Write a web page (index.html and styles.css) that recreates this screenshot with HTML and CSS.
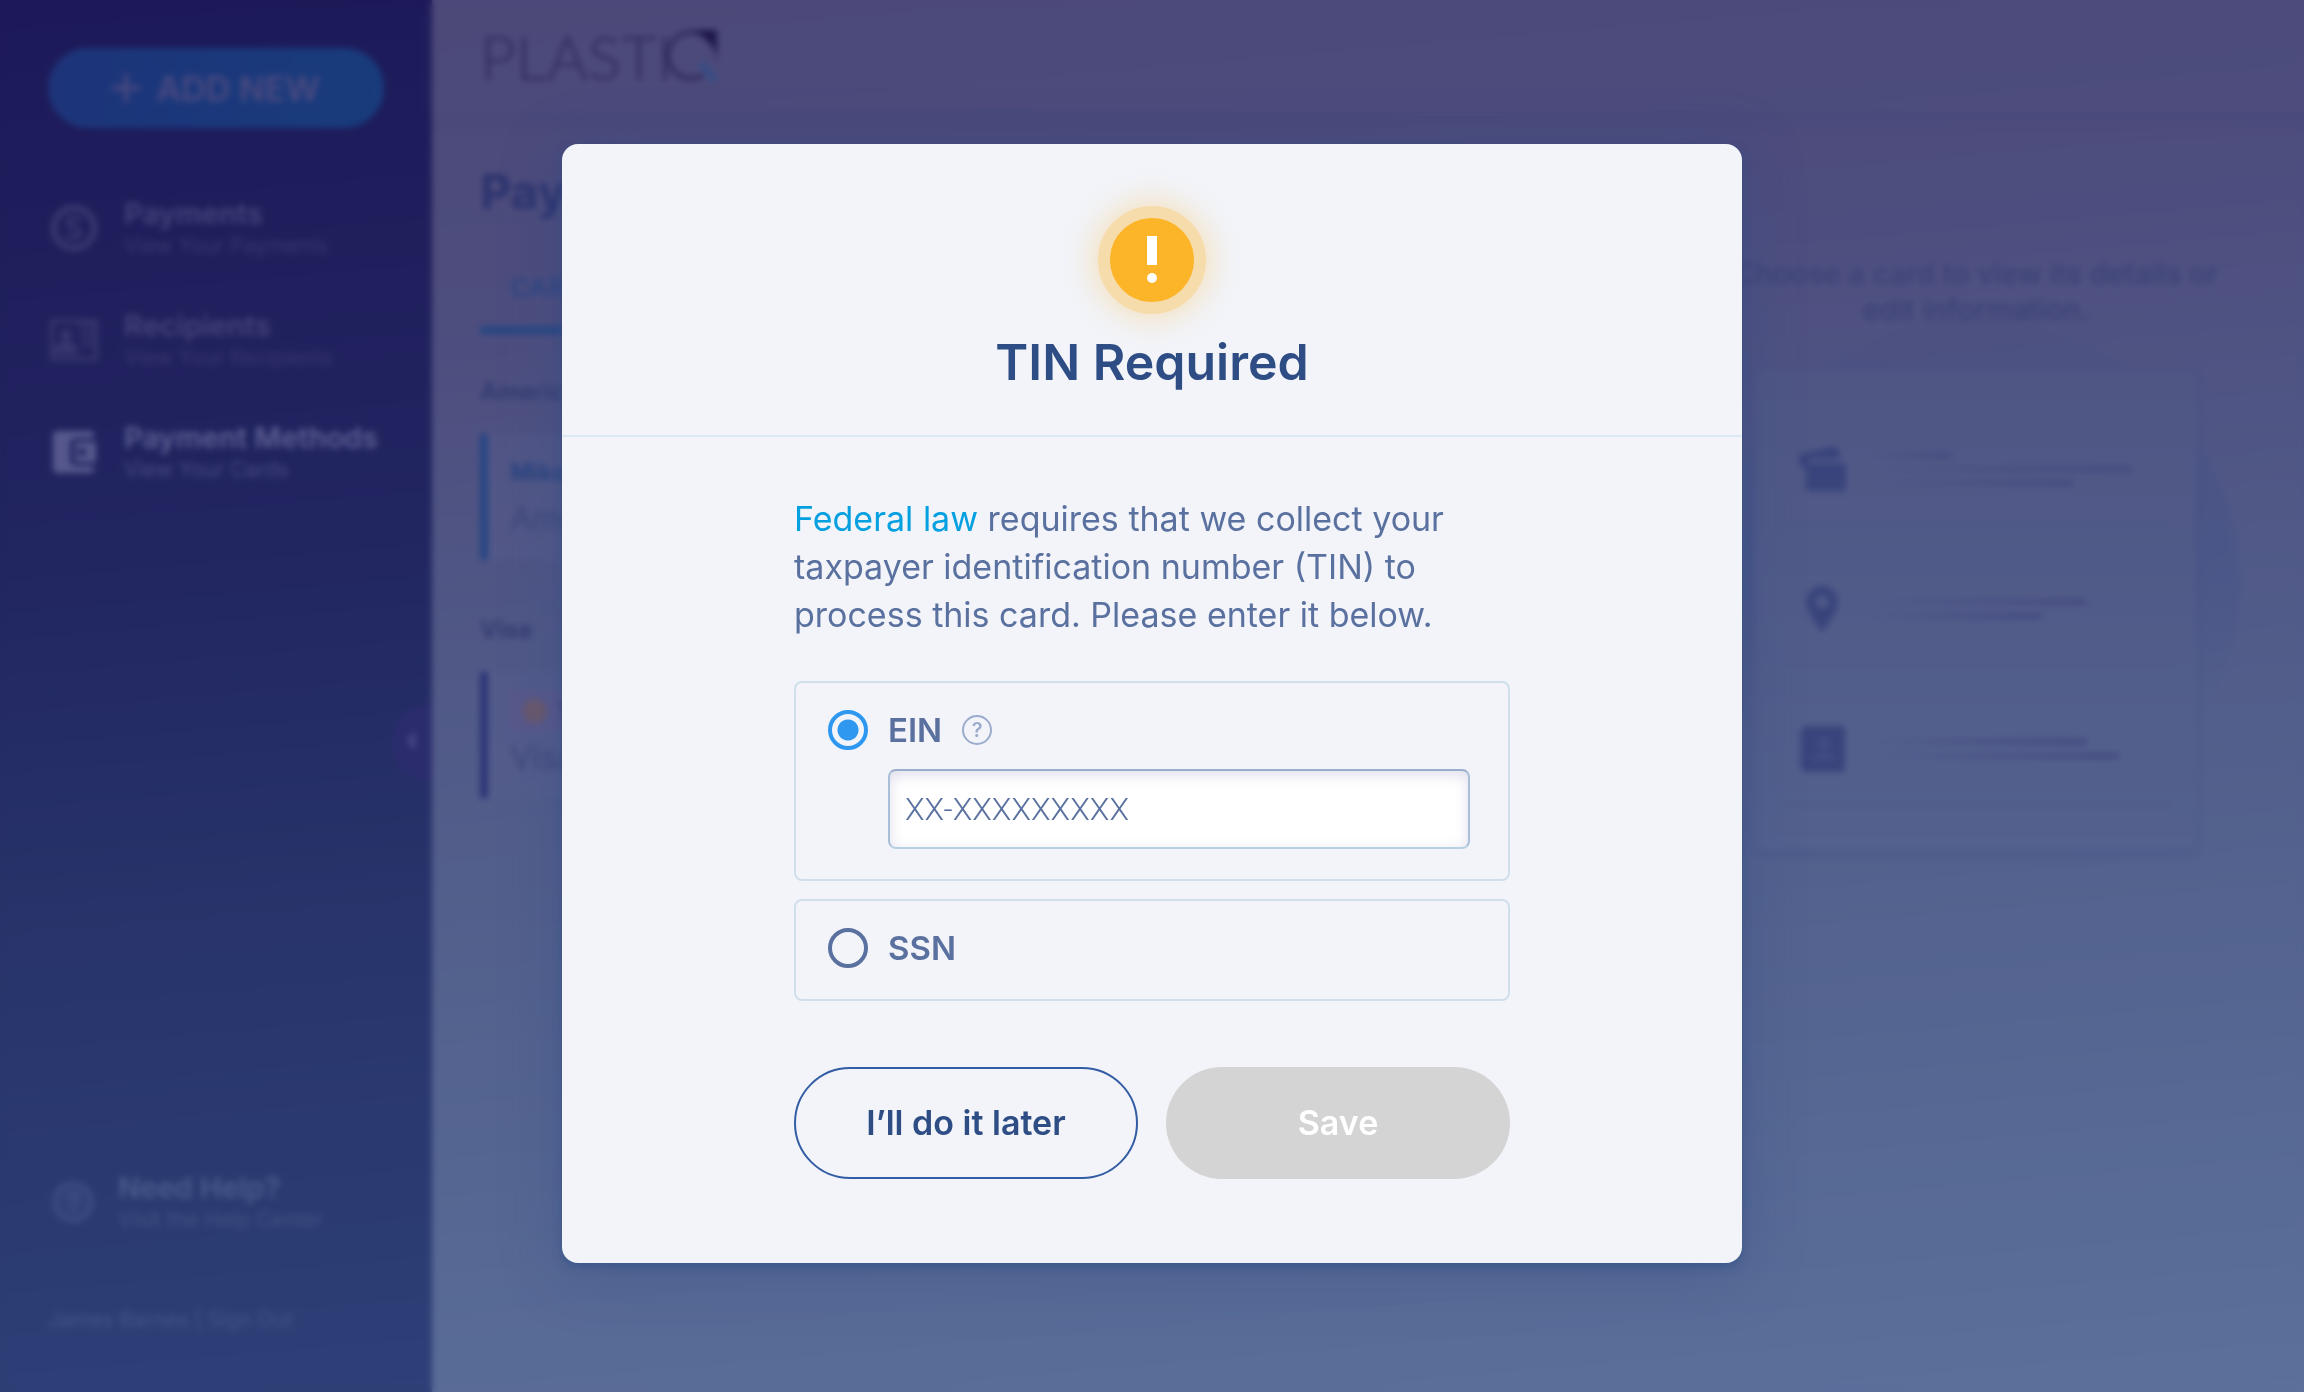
FILE: index.html
```html
<!DOCTYPE html>
<html lang="en">
<head>
<meta charset="utf-8">
<title>Plastiq – Payment Methods</title>
<link rel="stylesheet" href="styles.css">
</head>
<body>
<div class="app" inert>
  <aside class="sidebar">
    <button class="add-new" type="button">
      <svg width="28" height="28" viewBox="0 0 28 28" fill="none" stroke="currentColor" stroke-width="4"><path d="M14 0v28M0 14h28"/></svg>
      ADD NEW
    </button>
    <nav class="nav">
      <a class="nav-item" href="#payments">
        <svg class="nav-icon" viewBox="0 0 48 48" fill="none" stroke="currentColor" stroke-width="7"><circle cx="24" cy="24" r="20"/><path d="M30 17c-2-4-12-4-12 1 0 7 12 4 12 11 0 6-11 6-13 1" stroke-width="5"/></svg>
        <span class="nav-text"><span class="nav-title">Payments</span><span class="nav-sub">View Your Payments</span></span>
      </a>
      <a class="nav-item" href="#recipients">
        <svg class="nav-icon" viewBox="0 0 48 48" fill="none" stroke="currentColor" stroke-width="4"><path d="M2 5h44v38H2z"/><circle cx="16" cy="19" r="4" fill="currentColor"/><path d="M6 36c0-12 20-12 20 0z" fill="currentColor"/><path d="M30 8h15v22H33z" fill="currentColor" opacity=".5"/></svg>
        <span class="nav-text"><span class="nav-title">Recipients</span><span class="nav-sub">View Your Recipients</span></span>
      </a>
      <a class="nav-item active" href="#methods">
        <svg class="nav-icon" viewBox="0 0 48 48"><path fill="currentColor" d="M7 3h33a4 4 0 0 1 4 4v3H26a6 6 0 0 0-6 6v16a6 6 0 0 0 6 6h18v3a4 4 0 0 1-4 4H7a4 4 0 0 1-4-4V7a4 4 0 0 1 4-4z"/><path fill="currentColor" fill-rule="evenodd" d="M25 14h21v20H25zM32 20a4 4 0 1 0 .1 8 4 4 0 0 0-.1-8z"/></svg>
        <span class="nav-text"><span class="nav-title">Payment Methods</span><span class="nav-sub">View Your Cards</span></span>
      </a>
    </nav>
    <button class="collapse" type="button" aria-label="Collapse menu">
      <svg width="12" height="20" viewBox="0 0 12 20" fill="none" stroke="currentColor" stroke-width="4"><path d="M9 3 4 10l5 7"/></svg>
    </button>
    <a class="help" href="#help">
      <svg class="help-icon" viewBox="0 0 48 48" fill="none" stroke="currentColor" stroke-width="5"><circle cx="24" cy="24" r="21" fill="currentColor" fill-opacity=".4"/><path d="M18 20c0-8 12-7 12-1 0 4-6 4-6 9M24 31v5"/></svg>
      <span class="nav-text"><span class="nav-title">Need Help?</span><span class="nav-sub">Visit the Help Center</span></span>
    </a>
    <p class="account"><a href="#account">James Barnes</a> | <a href="#signout">Sign Out</a></p>
  </aside>

  <main class="main">
    <header class="topbar">
      <span class="logo">PLASTI<svg width="54" height="54" viewBox="0 0 54 54"><path fill="none" stroke="#2f2a5c" stroke-width="4" d="M38 46A23 23 0 1 1 46 15"/><path fill="#1d1848" d="M28 1h24v34C52 19 42 6 28 1z"/><path stroke="#364d86" stroke-width="7" d="m36 34 14 18"/></svg></span>
    </header>
    <div class="content">
      <section class="methods">
        <h1 class="page-title">Payment Methods</h1>
        <div class="tabs"><button class="tab" type="button">CARDS</button></div>
        <h2 class="group">American Express</h2>
        <div class="card selected"><strong class="card-owner">Mike’s Card</strong><span class="card-name">Amex</span></div>
        <h2 class="group">Visa</h2>
        <div class="card"><span class="badge"><i class="dot"></i>TIN Required</span><span class="card-name">Visa</span></div>
      </section>
      <section class="details">
        <p class="hint">Choose a card to view its details or edit information.</p>
        <div class="preview">
          <div class="preview-row">
            <svg class="preview-icon" viewBox="0 0 48 48"><path fill="currentColor" d="M0 10 36 1c2 0 3 1 4 3l3 10H12L8 22 4 24z"/><rect fill="currentColor" x="8" y="18" width="40" height="28" rx="3"/></svg>
            <span class="lines"><i class="w30"></i><i class="w100"></i><i class="w75"></i></span>
          </div>
          <div class="preview-row">
            <svg class="preview-icon" viewBox="0 0 48 48"><path fill="currentColor" fill-rule="evenodd" d="M24 1c9 0 16 7 16 16 0 11-16 30-16 30S8 28 8 17C8 8 15 1 24 1zm0 10a6 6 0 1 0 .1 12 6 6 0 0 0-.1-12z"/></svg>
            <span class="lines"><i class="w80"></i><i class="w65"></i></span>
          </div>
          <div class="preview-row">
            <svg class="preview-icon" viewBox="0 0 48 48"><rect fill="currentColor" x="4" y="1" width="43" height="46" rx="4"/><path stroke="currentColor" stroke-width="4" d="M1 10h6M1 19h6M1 29h6M1 38h6"/><g fill="#414c84"><circle cx="26" cy="18" r="7"/><path d="M14 36c0-12 24-12 24 0z"/></g></svg>
            <span class="lines"><i class="w80"></i><i class="w95"></i></span>
          </div>
        </div>
      </section>
    </div>
  </main>
</div>

<div class="overlay">
  <form class="modal" role="dialog" aria-modal="true" aria-labelledby="modal-title">
    <header class="modal-head">
      <span class="alert"><svg width="84" height="84" viewBox="0 0 84 84"><path fill="#fff" d="M37 18h10v29H37z"/><circle cx="42" cy="60" r="5" fill="#fff"/></svg></span>
      <h2 class="modal-title" id="modal-title">TIN Required</h2>
    </header>
    <div class="modal-body">
      <p class="message"><a href="#law">Federal law</a> requires that we collect your taxpayer identification number (TIN) to process this card. Please enter it below.</p>
      <div class="option">
        <div class="option-row">
          <input class="radio" type="radio" name="tin" id="ein" checked>
          <label for="ein">EIN</label>
          <button class="tip" type="button" aria-label="What is an EIN?">?</button>
        </div>
        <input class="field" type="text" placeholder="XX-XXXXXXXXX" aria-label="EIN number">
      </div>
      <div class="option">
        <div class="option-row">
          <input class="radio" type="radio" name="tin" id="ssn">
          <label for="ssn">SSN</label>
        </div>
      </div>
      <div class="actions">
        <button class="btn later" type="button">I’ll do it later</button>
        <button class="btn save" type="submit" disabled>Save</button>
      </div>
    </div>
  </form>
</div>
</body>
</html>
```
FILE: styles.css
```css
* { box-sizing: border-box; }
body { margin: 0; font-family: Inter, "Liberation Sans", sans-serif; }
h1, h2, p { margin: 0; }
a { color: inherit; text-decoration: none; }
button { font: inherit; color: inherit; border: 0; background: none; padding: 0; }

/* App behind the dialog */
.app {
  display: grid;
  grid-template-columns: 432px 1fr;
  height: 100vh;
  overflow: hidden;
}
.sidebar {
  position: relative;
  display: flex;
  flex-direction: column;
  padding: 48px 48px 58px;
  background: linear-gradient(175deg, #1d1959 0%, #212560 38%, #28346b 66%, #2d4077 100%);
  color: #45437c;
}
.add-new {
  display: flex;
  align-items: center;
  justify-content: center;
  gap: 16px;
  height: 80px;
  border-radius: 40px;
  background: linear-gradient(100deg, #1d347a, #183c7c);
  color: #4b4a80;
  font-size: 34px;
  font-weight: 600;
}
.nav { display: grid; gap: 48px; margin-top: 68px; }
.nav-item, .help { display: flex; align-items: center; gap: 26px; }
.nav-icon { width: 48px; height: 48px; margin-left: 2px; color: #38366f; }
.nav-text { display: grid; }
.nav-title { font-size: 29px; line-height: 36px; font-weight: 600; }
.nav-sub { font-size: 21px; line-height: 28px; color: #37366f; }
.active { color: #5d5e93; }
.active .nav-icon { color: #56588d; }
.active .nav-sub { color: #454880; }
.collapse {
  position: absolute;
  right: 0;
  top: 705px;
  width: 40px;
  height: 76px;
  border-radius: 38px 0 0 38px;
  background: #2b2c6e;
  color: #4c4e89;
}
.help { gap: 24px; margin-top: auto; color: #4b5a8b; }
.help-icon { width: 42px; height: 42px; margin-left: 4px; color: #3e4e84; }
.help .nav-sub { color: #415184; }
.account { margin-top: 72px; font-size: 21px; line-height: 28px; color: #425386; }

.main {
  position: relative;
  z-index: 0;
  background: linear-gradient(175deg, #4c4979 0%, #4d4d7e 20%, #505886 42%, #54638f 68%, #5b709b 100%);
  color: #353971;
}
.topbar {
  display: flex;
  align-items: center;
  height: 112px;
  padding: 0 48px;
  box-shadow: 0 4px 16px rgba(60, 68, 120, .3);
}
.logo {
  display: flex;
  align-items: center;
  font-family: Lato, sans-serif;
  font-size: 62px;
  font-weight: 300;
  line-height: 80px;
  color: #2f2a5c;
}
.logo svg { margin-left: -8px; }
.content { display: flex; justify-content: space-between; padding: 48px; }
.methods { width: 1100px; }
.page-title { font-size: 48px; line-height: 64px; color: #2b336e; }
.tabs { margin-top: 24px; border-bottom: 2px solid #464a7c; }
.tab { height: 86px; padding: 0 30px; border-bottom: 8px solid #284783; font-size: 26px; font-weight: 600; color: #2e4682; }
.group { margin-top: 40px; padding-bottom: 2px; font-size: 24px; line-height: 32px; color: #343c72; }
.card + .group { margin-top: 54px; }
.card {
  display: grid;
  align-content: center;
  justify-items: start;
  gap: 4px;
  height: 126px;
  margin-top: 24px;
  padding-left: 22px;
  border-left: 8px solid #2c3577;
  background: rgba(90, 95, 145, .3);
}
.selected { border-color: #274583; }
.card-owner { font-size: 24px; line-height: 40px; color: #2b4480; }
.card-name { font-size: 32px; line-height: 44px; color: #3e4679; }
.badge { display: flex; align-items: center; gap: 10px; height: 42px; padding: 0 13px; background: #58588a; font-size: 22px; font-weight: 600; }
.dot { width: 24px; height: 24px; border-radius: 50%; background: #6a586c; }

.details { width: 560px; padding-top: 96px; }
.hint { padding: 0 32px; font-size: 29px; line-height: 36px; font-weight: 500; text-align: center; color: #3b4176; }
.preview {
  position: relative;
  display: grid;
  gap: 28px;
  width: 440px;
  margin: 42px auto 0;
  padding: 44px 24px;
  border-radius: 8px;
  background: linear-gradient(#4f5684, #53618e);
  box-shadow: 0 4px 8px rgba(66, 82, 134, .5);
}
/* Round halo behind the preview card */
.preview::before {
  content: "";
  position: absolute;
  z-index: -1;
  left: -44px;
  top: -50px;
  width: 528px;
  height: 528px;
  border-radius: 50%;
  background: linear-gradient(rgba(68, 76, 128, .2), rgba(68, 84, 136, .5) 45%, rgba(68, 84, 136, 0) 75%);
}
.preview-row {
  display: flex;
  align-items: center;
  gap: 22px;
  height: 112px;
  padding-left: 18px;
  border-bottom: 2px solid #4c5786;
}
.preview-icon { width: 48px; height: 48px; color: #39447c; }
.lines { display: grid; gap: 8px; width: 264px; }
.lines i { height: 6px; border-radius: 3px; background: linear-gradient(90deg, rgba(66, 73, 126, 0), #444b80); }
.w30 { width: 32%; }
.w65 { width: 66%; }
.w75 { width: 78%; }
.w80 { width: 83%; }
.w95 { width: 95%; }
.w100 { width: 100%; }

/* Dialog */
.overlay {
  position: fixed;
  inset: 0;
  display: flex;
  align-items: flex-start;
  justify-content: center;
  padding: 144px 32px 32px;
  backdrop-filter: blur(3px);
}
.modal {
  width: 100%;
  max-width: 1180px;
  border-radius: 16px;
  background: #f2f4fa;
  box-shadow: 0 4px 8px rgba(44, 78, 134, .5), 0 8px 60px rgba(52, 78, 136, .4);
  color: #5a719f;
}
.modal-head {
  display: flex;
  flex-direction: column;
  align-items: center;
  gap: 16px;
  padding: 62px 32px 41px;
  border-bottom: 2px solid #dbe9f7;
}
.alert {
  width: 108px;
  height: 108px;
  border: 12px solid #f6dcab;
  border-radius: 50%;
  background: #fcb428;
  box-shadow: 0 0 36px rgba(252, 180, 40, .4);
}
.alert svg { display: block; }
.modal-title { font-size: 50px; line-height: 64px; font-weight: 600; color: #2f4d85; }
.modal-body {
  display: grid;
  gap: 18px;
  max-width: 716px;
  margin: 0 auto;
  padding: 58px 0 84px;
  font-size: 34px;
  line-height: 48px;
}
.message { margin-bottom: 24px; }
.message a { color: #04a0e0; }
.option { padding: 26px 38px 30px 32px; border: 2px solid #d0dfe9; border-radius: 8px; }
.option-row { display: flex; align-items: center; height: 42px; font-size: 33px; font-weight: 600; }
.radio {
  appearance: none;
  width: 40px;
  height: 40px;
  margin: 0 20px 0 0;
  border: 4px solid #5a719f;
  border-radius: 50%;
}
.radio:checked { border-color: #2e98f1; background: radial-gradient(circle, #2e98f1 10px, transparent 11px); }
.tip {
  width: 30px;
  height: 30px;
  margin-left: 20px;
  border: 2px solid #9baccd;
  border-radius: 50%;
  font-size: 20px;
  line-height: 26px;
  font-weight: 600;
  color: #9baccd;
}
.field {
  display: block;
  width: calc(100% - 60px);
  height: 80px;
  margin: 18px 0 0 60px;
  padding: 0 15px;
  border: 2px solid #a9bfd9;
  border-top-color: #9baccd;
  border-bottom-color: #b7d0e2;
  border-radius: 8px;
  background: #fff;
  box-shadow: inset 0 4px 14px rgba(100, 85, 160, .2);
  font: 300 32px/48px Roboto, sans-serif;
  color: #5a719f;
}
.field::placeholder { color: #5a719f; opacity: 1; }
.actions { display: grid; grid-template-columns: 1fr 1fr; gap: 28px; margin-top: 48px; }
.btn { height: 112px; border-radius: 56px; font-size: 34px; font-weight: 600; }
.later { border: 2px solid #325ca3; color: #2f4d85; }
.save { background: #d4d4d4; color: #fff; }
```
